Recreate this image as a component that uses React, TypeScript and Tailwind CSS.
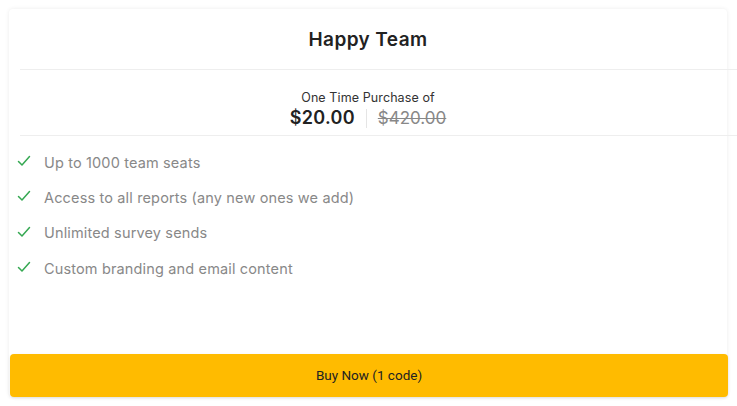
import React from "react";

const features = [
  "Up to 1000 team seats",
  "Access to all reports (any new ones we add)",
  "Unlimited survey sends",
  "Custom branding and email content",
];

function Check() {
  return (
    <svg width="14" height="12" viewBox="0 0 14 12" fill="none" className="shrink-0 -mt-[3px]">
      <path d="M1.5 6.5 L5 10 L12.5 1.5" stroke="#35a852" strokeWidth="1.5" strokeLinecap="round" strokeLinejoin="round" />
    </svg>
  );
}

export default function App() {
  return (
    <div className="w-[737px] h-[406px] bg-white pt-[9px] pl-[9px] pr-[10px]" style={{ fontFamily: 'Inter, "Liberation Sans", sans-serif' }}>
      <div className="h-[388px] flex flex-col bg-white rounded-[4px] shadow-[0_0_4px_rgba(0,0,0,0.08)]">
        <div className="h-[60px] flex items-center justify-center pt-[2px]">
          <h2 className="text-[19px] font-semibold text-[#222] tracking-[0.4px]">Happy Team</h2>
        </div>
        <div className="h-px bg-[#eeeeee] ml-[11px] mr-[-10px]" />
        <div className="h-[65px] flex flex-col items-center justify-center pt-[14px]">
          <div className="text-[12.5px] leading-[16px] text-[#333] tracking-[0.1px]">One Time Purchase of</div>
          <div className="flex items-center mt-[1px]">
            <span className="text-[18px] font-semibold text-[#222] leading-[22px] tracking-[0.3px]">$20.00</span>
            <span className="w-px h-[19px] bg-[#e5e5e5] mx-[11px]" />
            <span className="text-[17px] text-[#888] line-through leading-[22px]">$420.00</span>
          </div>
        </div>
        <div className="h-px bg-[#eeeeee] ml-[11px] mr-[-10px]" />
        <ul className="flex flex-col gap-[14.3px] pt-[16px] pl-[8px]">
          {features.map((f) => (
            <li key={f} className="flex items-center gap-[13px] h-[21px]">
              <Check />
              <span className="text-[14.5px] text-[#888] tracking-[0.15px]">{f}</span>
            </li>
          ))}
        </ul>
        <div className="flex-1" />
        <button className="h-[43px] w-full ml-[1px] rounded-[4px] bg-[#ffbb00] text-[13.5px] text-[#222] shadow-[0_1px_3px_rgba(0,0,0,0.1)]" style={{ fontFamily: 'Roboto, "Liberation Sans", sans-serif' }}>
          Buy Now (1 code)
        </button>
      </div>
    </div>
  );
}
